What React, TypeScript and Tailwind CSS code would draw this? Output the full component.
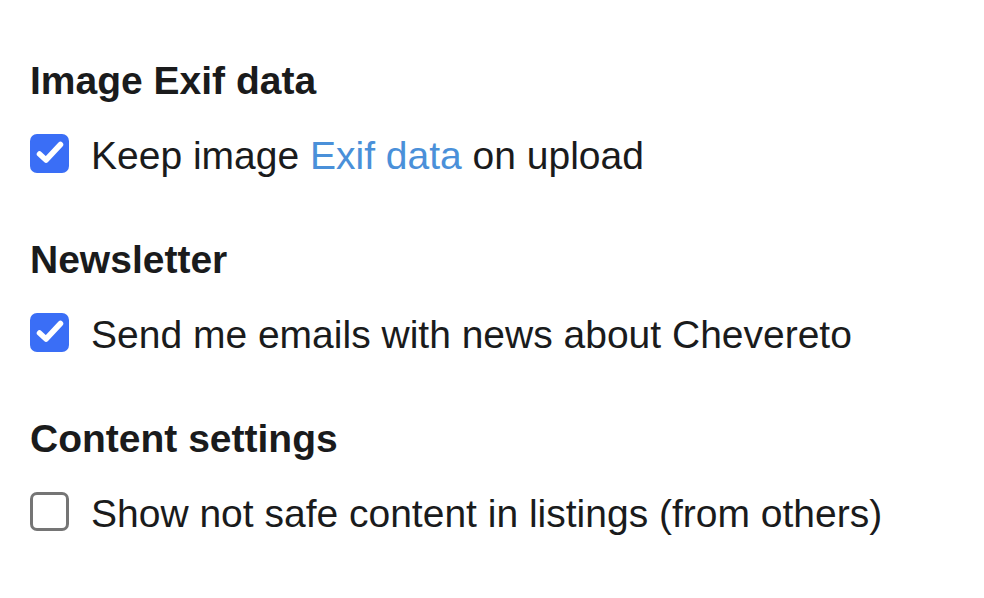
type Option = {
  title: string;
  checked: boolean;
  label: React.ReactNode;
};

const options: Option[] = [
  {
    title: "Image Exif data",
    checked: true,
    label: (
      <>
        Keep image <a href="#" className="text-[#4a90d9]">Exif data</a> on upload
      </>
    ),
  },
  { title: "Newsletter", checked: true, label: "Send me emails with news about Chevereto" },
  { title: "Content settings", checked: false, label: "Show not safe content in listings (from others)" },
];

function Box({ checked }: { checked: boolean }) {
  if (checked) {
    return (
      <span className="flex h-[39px] w-[39px] shrink-0 rounded-[7px] bg-[#3a6ef6]">
        <svg viewBox="0 0 39 39" className="h-[39px] w-[39px]">
          <polyline
            points="9.5,20 16,26 30.5,10.5"
            fill="none"
            stroke="white"
            strokeWidth={5.5}
            strokeLinecap="round"
            strokeLinejoin="round"
          />
        </svg>
      </span>
    );
  }
  return <span className="h-[39px] w-[39px] shrink-0 rounded-[7px] border-[3px] border-[#757575] bg-white" />;
}

export default function App() {
  return (
    <div className="min-h-screen bg-white px-[30px] pt-[61px] text-[#1a1b1c]" style={{ fontFamily: '"Liberation Sans", Arial, sans-serif' }}>
      {options.map((o, i) => (
        <section key={o.title} className={i > 0 ? "mt-[67px]" : ""}>
          <h3 className="text-[39px] font-bold leading-[40px]">{o.title}</h3>
          <label className="mt-[33px] flex h-[39px] items-center gap-[22px]">
            <Box checked={o.checked} />
            <span className="pt-[5px] text-[39px] leading-[40px]">{o.label}</span>
          </label>
        </section>
      ))}
    </div>
  );
}
